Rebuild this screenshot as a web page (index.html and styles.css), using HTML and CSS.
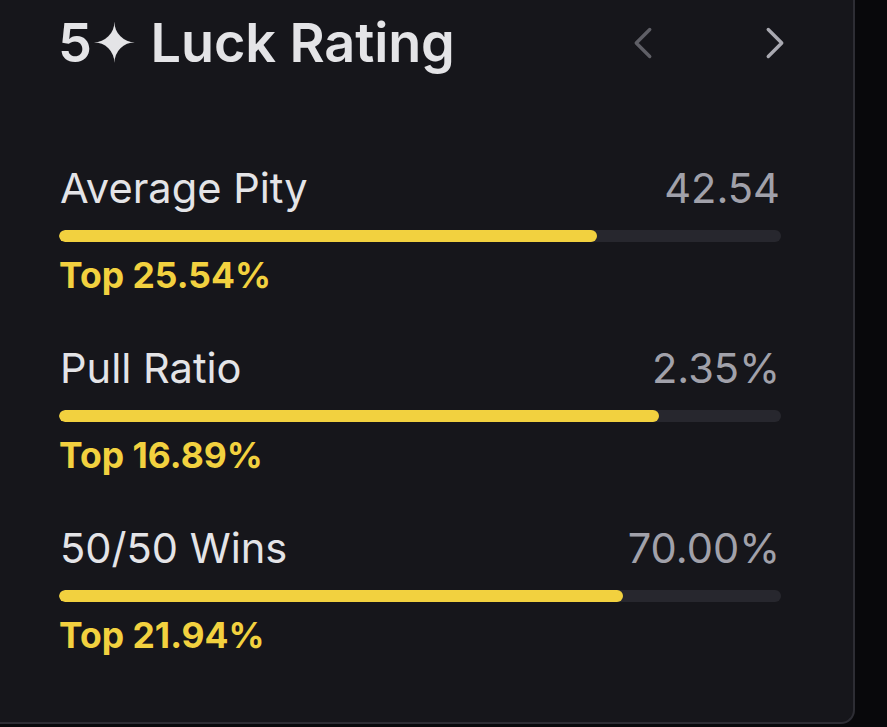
FILE: index.html
```html
<!DOCTYPE html>
<html lang="en">
<head>
<meta charset="utf-8">
<title>Luck Rating</title>
<link rel="stylesheet" href="styles.css">
</head>
<body>
<div class="page">
  <section class="card">
    <header class="card-head">
      <h2 class="title">5✦ Luck Rating</h2>
      <nav class="nav">
        <button class="nav-btn dim" aria-label="Previous">
          <svg viewBox="0 0 24 24" width="54" height="54"><path d="m15 18-6-6 6-6"/></svg>
        </button>
        <button class="nav-btn" aria-label="Next">
          <svg viewBox="0 0 24 24" width="54" height="54"><path d="m9 18 6-6-6-6"/></svg>
        </button>
      </nav>
    </header>
    <div class="stats">
      <div class="stat">
        <div class="stat-row"><span class="label">Average Pity</span><span class="value">42.54</span></div>
        <div class="track"><div class="fill" style="width:74.46%"></div></div>
        <div class="top">Top 25.54%</div>
      </div>
      <div class="stat">
        <div class="stat-row"><span class="label">Pull Ratio</span><span class="value">2.35%</span></div>
        <div class="track"><div class="fill" style="width:83.11%"></div></div>
        <div class="top">Top 16.89%</div>
      </div>
      <div class="stat">
        <div class="stat-row"><span class="label">50/50 Wins</span><span class="value">70.00%</span></div>
        <div class="track"><div class="fill" style="width:78.06%"></div></div>
        <div class="top">Top 21.94%</div>
      </div>
    </div>
  </section>
</div>
</body>
</html>
```
FILE: styles.css
```css
* { box-sizing: border-box; }
html, body { margin: 0; padding: 0; }
body {
  background: #08080b;
  font-family: Inter, "Noto Sans", "DejaVu Sans", sans-serif;
  width: 887px;
  height: 727px;
  overflow: hidden;
}
.page { padding: 0; }
.card {
  width: 855px;
  height: 724px;
  background: #16161b;
  border-right: 2px solid #2d2d34;
  border-bottom: 2px solid #2d2d34;
  border-bottom-right-radius: 14px;
  padding: 11px 72px 0 59px;
}
.card-head {
  display: flex;
  justify-content: space-between;
  align-items: center;
  height: 64px;
}
.title {
  margin: 0 0 0 -1px;
  font-size: 54px;
  line-height: 64px;
  font-weight: 600;
  color: #e4e4e7;
  letter-spacing: -0.1px;
}
.nav {
  display: flex;
  gap: 78px;
  margin-right: -21px;
}
.nav-btn {
  width: 54px;
  height: 54px;
  padding: 0;
  border: 0;
  background: none;
  display: flex;
}
.nav-btn svg {
  fill: none;
  stroke: #a9a9b1;
  stroke-width: 1.5;
  stroke-linecap: round;
  stroke-linejoin: round;
}
.nav-btn.dim svg { stroke: #5f5f66; }
.stats {
  display: flex;
  flex-direction: column;
  gap: 48px;
  margin-top: 89px;
}
.stat { display: flex; flex-direction: column; }
.stat-row {
  display: flex;
  justify-content: space-between;
  font-size: 41.6px;
  line-height: 48px;
  padding: 0 1px 0 1px;
}
.label { color: #e4e4e7; }
.value { color: #a1a1aa; }
.track {
  margin-top: 18px;
  height: 12px;
  border-radius: 6px;
  background: #27272e;
  overflow: hidden;
}
.fill {
  height: 100%;
  background: #f2d13f;
  border-radius: 6px;
}
.top {
  margin-top: 13px;
  font-size: 35.5px;
  line-height: 41px;
  font-weight: 700;
  color: #f2d13f;
  padding-left: 0;
}
```
